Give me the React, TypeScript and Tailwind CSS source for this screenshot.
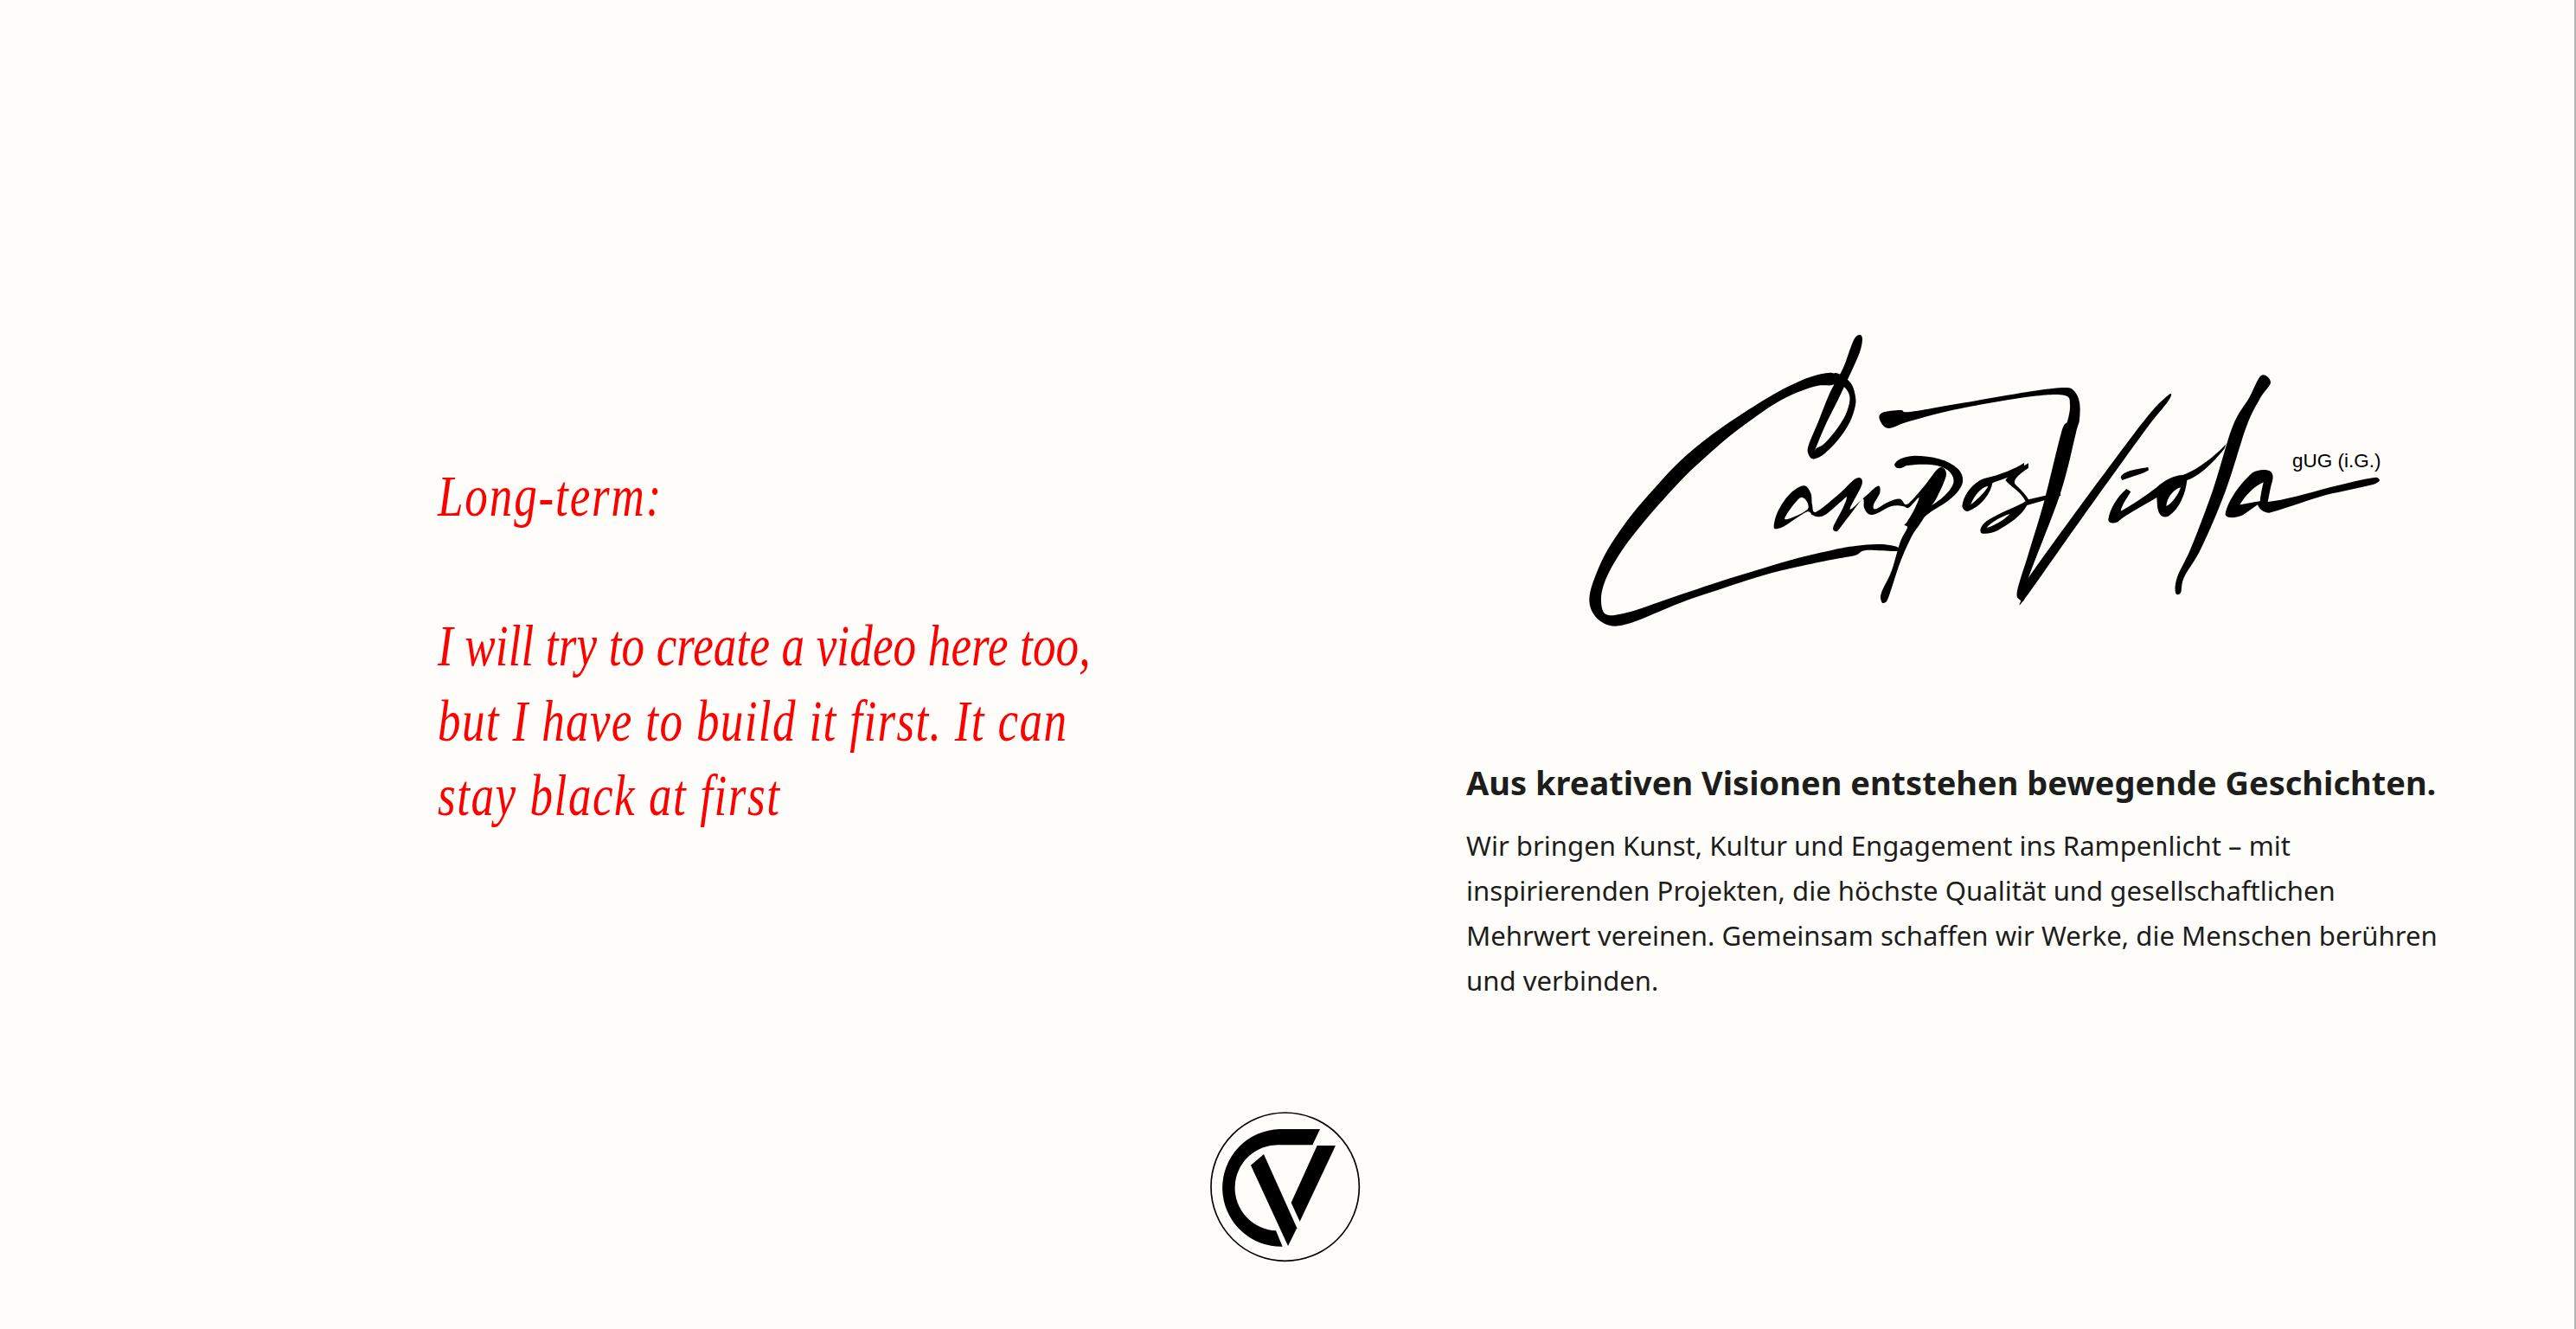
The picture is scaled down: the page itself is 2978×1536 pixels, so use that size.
import React from 'react';

// closed curve through brush outline points
const smooth = (pts: number[][]) => {
  const n = pts.length;
  let d = `M${pts[0][0]} ${pts[0][1]}`;
  for (let i = 0; i < n; i++) {
    const a = pts[(i - 1 + n) % n];
    const b = pts[i];
    const c = pts[(i + 1) % n];
    const e = pts[(i + 2) % n];
    d += `C${b[0] + (c[0] - a[0]) / 6} ${b[1] + (c[1] - a[1]) / 6} ${c[0] - (e[0] - b[0]) / 6} ${c[1] - (e[1] - b[1]) / 6} ${c[0]} ${c[1]}`;
  }
  return d + 'Z';
};

const sweep = [[885,20],[840,22],[770,45],[680,90],[590,145],[500,205],[420,265],[340,335],[270,410],[200,490],[140,570],[90,650],[55,730],[38,790],[42,835],[65,870],[100,892],[140,895],[200,878],[280,845],[380,805],[500,765],[640,720],[760,690],[880,665],[960,650],[996,633],[1104,636],[1104,621],[1044,612],[960,618],[880,632],[760,660],[640,695],[500,738],[380,778],[280,812],[200,840],[140,855],[105,858],[85,845],[78,810],[82,770],[100,720],[130,665],[170,605],[230,530],[300,450],[370,375],[440,310],[520,240],[600,180],[680,125],[760,85],[830,62],[885,58]];
const stem = [[975,-114],[984,-99],[975,-54],[945,15],[900,110],[860,190],[822,280],[812,315],[797,300],[797,270],[830,190],[870,90],[906,24],[924,-15],[954,-96]];
const loop = [[885,20],[915,28],[945,55],[958,90],[960,130],[940,190],[900,250],[850,300],[812,316],[822,283],[850,265],[890,220],[925,165],[940,115],[935,85],[915,62],[885,58]];
const barAndStroke = [[2173,485],[2176,477],[2197,474],[2208,476],[2267,466],[2350,452],[2387,448],[2398,452],[2404,465],[2404,485],[2400,500],[2382,570],[2345,668],[2340,693],[2335,693],[2332,683],[2345,640],[2363,580],[2383,500],[2390,487],[2393,468],[2387,457],[2350,458],[2267,472],[2207,487],[2183,495]];
const rightStroke = [[2505,458],[2507,463],[2478,500],[2401,607],[2340,693],[2338,690],[2345,668],[2468,500]];
const tallL = [[2614,434],[2625,442],[2613,460],[2597,493],[2573,567],[2545,633],[2525,667],[2521,685],[2515,685],[2517,667],[2533,633],[2558,567],[2581,493],[2600,460]];
const amp = [[32,268],[45,215],[85,155],[135,124],[160,150],[165,190],[178,215],[250,160],[318,98],[338,118],[296,205],[345,165],[392,125],[400,148],[378,190],[385,205],[430,180],[470,170],[495,188],[550,130],[605,62],[630,85],[600,160],[575,200],[540,255],[510,300],[470,390],[430,510],[415,530],[405,525],[405,495],[440,420],[470,320],[495,270],[485,260],[495,248],[520,205],[535,165],[500,200],[480,195],[440,195],[385,222],[360,222],[345,200],[340,170],[300,220],[262,270],[248,283],[238,268],[270,205],[285,165],[270,175],[215,222],[185,232],[165,225],[145,215],[75,260],[48,272]];
const aHole = [[70,240],[125,165],[150,205]];

function SignatureLogo() {
  return (
    <svg className="block w-[1000px] h-[400px]" viewBox="1800 360 1000 400" fill="#000">
      {/* big C with stem and loop */}
      <g transform="translate(1825 425) scale(.33333)">
        <path d={smooth(sweep)} />
        <path d={smooth(stem)} />
        <path d={smooth(loop)} />
      </g>
      <path d={smooth(barAndStroke)} />
      <path d={smooth(rightStroke)} />
      <path d={smooth(tallL)} />
      {/* a m u p o s */}
      <g transform="translate(2040 520) scale(.33333)">
        <path fillRule="evenodd" d={smooth(amp) + smooth(aHole)} />
        <path d="M450 52 C455 35 480 22 520 20 C580 20 640 35 670 65 C690 85 692 110 680 130 C660 165 620 190 580 212 L550 235 L575 195 C610 175 645 145 655 115 C660 90 640 65 600 55 C565 48 520 50 490 55 C475 65 455 70 450 52 Z" />
        <path fillRule="evenodd" d="M685 195 C690 150 730 105 770 97 C820 85 870 65 900 45 L900 70 C860 95 810 105 790 115 C780 165 740 200 705 213 C695 213 687 205 685 195 Z M715 190 C740 170 770 140 775 125 C750 130 725 160 715 190 Z" />
        <path fillRule="evenodd" d="M915 46 L915 62 C890 80 860 100 868 118 C890 140 910 160 915 172 L1023 147 L1027 158 L910 192 C890 230 850 255 810 278 C790 288 760 295 750 287 C742 272 760 250 790 235 C830 212 880 195 905 178 C890 145 850 125 835 105 C850 85 890 60 915 46 Z M770 270 C790 265 830 245 850 222 C820 232 785 250 770 270 Z" />
      </g>
      {/* i o a */}
      <g transform="translate(2320 500) scale(.33333)">
        <path d="M395 155 C400 140 420 130 490 120 L492 130 C470 145 440 150 400 165 Z" />
        <path fillRule="evenodd" d="M352 300 C358 265 380 225 415 195 L430 205 C415 230 400 250 395 272 C430 255 480 220 520 190 C545 165 580 148 610 147 C650 135 720 85 760 40 L755 55 C720 100 670 150 625 165 C620 210 600 265 560 290 C540 298 525 285 522 255 L520 225 C480 250 410 285 385 310 C365 318 350 312 352 300 Z M553 255 C570 250 595 215 603 190 C580 195 555 225 553 255 Z" />
        <path fillRule="evenodd" d="M758 285 C760 250 800 185 850 140 C870 128 900 125 915 135 C930 150 920 170 915 190 L905 240 C960 235 1040 212 1120 190 C1180 175 1240 160 1280 155 C1290 156 1294 162 1292 168 C1285 175 1275 178 1270 180 C1220 192 1160 205 1110 215 C1050 232 990 255 910 278 C890 278 875 265 870 250 L820 285 C800 295 765 300 758 285 Z M808 250 C830 215 860 185 890 172 C885 195 880 215 878 238 C850 242 825 248 808 250 Z" />
      </g>
    </svg>
  );
}

function CvMark() {
  return (
    <svg className="block w-[260px] h-[230px]" viewBox="0 0 780 690">
      <circle cx="377" cy="335" r="257" fill="none" stroke="#000" strokeWidth="5" />
      <path d="M498 135 L358 135 A203 203 0 0 0 368 542 L345 487 A147 147 0 0 1 358 190 L472 190 Z" fill="#000" />
      <path d="M258 260 L303 222 L418 478 L387 540 Z" fill="#000" />
      <path d="M488 192 L552 192 L428 455 L398 390 Z" fill="#000" />
    </svg>
  );
}

export default function App() {
  return (
    <div className="h-[1536px] w-full overflow-hidden bg-[#fefdfa] border-r-2 border-[#b4b4b2] flex flex-col">
      <div className="h-[1260px] flex">
        <div className="w-[1695px] pl-[506px] pt-[530px]">
          <div className="origin-left scale-x-[0.78] italic text-[#ff0000] text-[68px] leading-[86.5px] whitespace-nowrap font-['Liberation_Serif',serif]">
            <p className="tracking-[2.4px]">Long-term:</p>
            <p className="mt-[86.5px] tracking-[0.2px]">I will try to create a video here too,</p>
            <p className="tracking-[1.75px]">but I have to build it first. It can</p>
            <p className="tracking-[2px]">stay black at first</p>
          </div>
        </div>
        <div className="flex-1 pt-[360px]">
          <div className="relative ml-[105px] w-[1000px]">
            <SignatureLogo />
            <span className="absolute left-[850px] top-[162px] text-[22.5px] leading-none text-black font-['Liberation_Sans',sans-serif]">
              gUG (i.G.)
            </span>
          </div>
          <div className="mt-[118px] w-[1135px] font-['Noto_Sans',sans-serif] text-[#1d1d1b]">
            <h1 className="text-[38px] leading-[52px] font-bold">Aus kreativen Visionen entstehen bewegende Geschichten.</h1>
            <p className="mt-[21px] text-[31.1px] leading-[52px]">
              Wir bringen Kunst, Kultur und Engagement ins Rampenlicht – mit inspirierenden Projekten, die höchste Qualität und gesellschaftlichen Mehrwert vereinen. Gemeinsam schaffen wir Werke, die Menschen berühren und verbinden.
            </p>
          </div>
        </div>
      </div>
      <div className="flex justify-center pl-[4px]">
        <CvMark />
      </div>
    </div>
  );
}
